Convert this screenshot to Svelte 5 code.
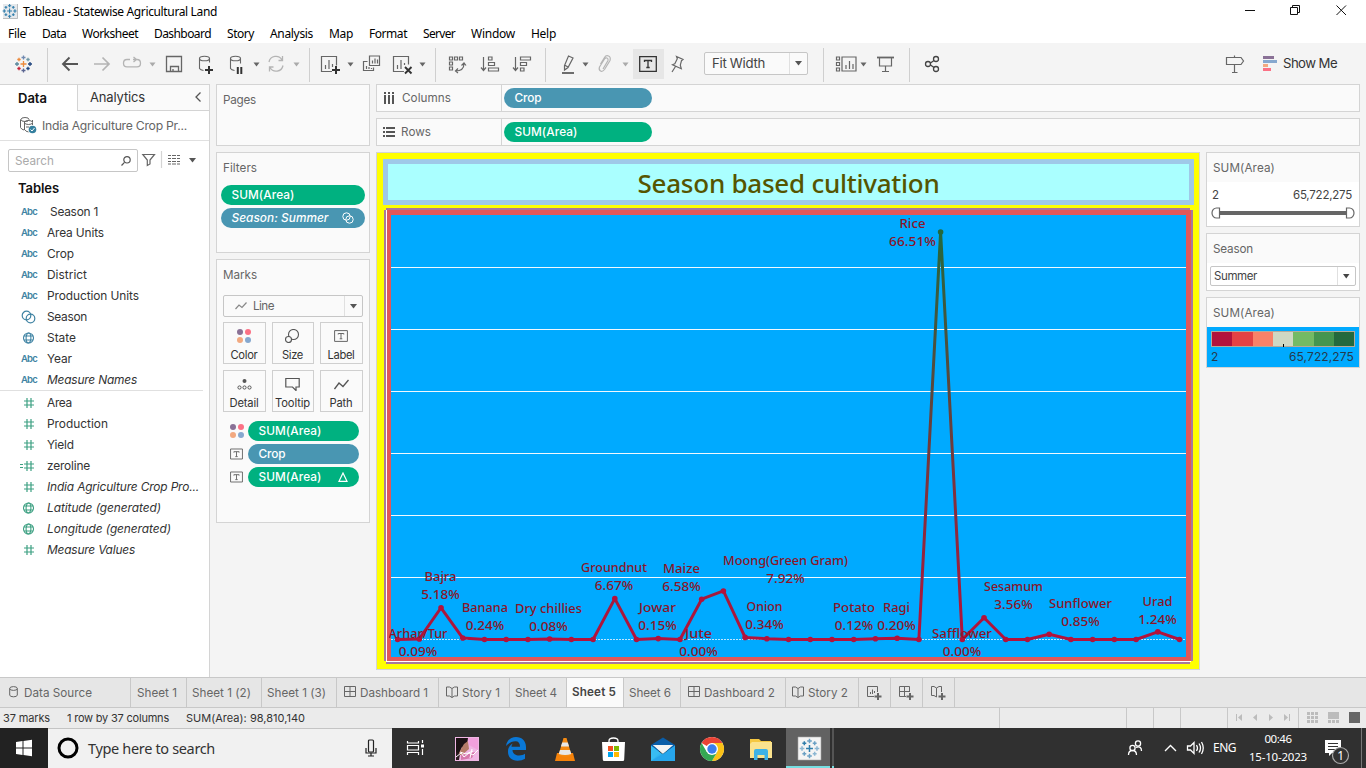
<script>
  // Tracks a label so that it takes exactly the given width.
  function fit(node, w) {
    const natural = node.getBoundingClientRect().width;
    const n = node.textContent.length;
    node.style.letterSpacing = ((w - natural) / n).toFixed(3) + 'px';
  }

  const menus = [['File', 18], ['Data', 24], ['Worksheet', 56], ['Dashboard', 57], ['Story', 27], ['Analysis', 43], ['Map', 24], ['Format', 38], ['Server', 32], ['Window', 44], ['Help', 25]];

  const dimensions = [
    ['abc', 'Season 1', 48, 'shift'], ['abc', 'Area Units', 57, ''], ['abc', 'Crop', 27, ''], ['abc', 'District', 40, ''],
    ['abc', 'Production Units', 92, ''], ['set', 'Season', 40, ''], ['globe', 'State', 29, ''], ['abc', 'Year', 25, ''],
    ['abc', 'Measure Names', 90, 'it']
  ];
  const measures = [
    ['hash', 'Area', 25, ''], ['hash', 'Production', 61, ''], ['hash', 'Yield', 27, ''], ['eqhash', 'zeroline', 43, ''],
    ['hash', 'India Agriculture Crop Pro...', 152, 'it'], ['globe', 'Latitude (generated)', 114, 'it'],
    ['globe', 'Longitude (generated)', 124, 'it'], ['hash', 'Measure Values', 88, 'it']
  ];

  const values = [0, 0.09, 5.18, 0.24, 0, 0, 0, 0.08, 0, 0, 6.67, 0, 0.15, 0, 6.58, 7.92, 0.34, 0.12, 0, 0, 0, 0, 0.12, 0.2, 0, 66.51, 0, 3.56, 0, 0, 0.85, 0, 0, 0, 0, 1.24, 0];
  const points = values.map((v, i) => [397.6 + i * 21.72, 639.5 - v * 6.127]);
  const line = points.map((p) => p[0].toFixed(2) + ',' + p[1].toFixed(2)).join(' ');
  const labels = [
    ['Arhar/Tur', 418, 638, 59, '0.09%', 418], ['Bajra', 440.5, 581, 32, '5.18%', 440.5], ['Banana', 485, 612, 46, '0.24%', 485],
    ['Dry chillies', 548.5, 613, 67, '0.08%', 548.5], ['Groundnut', 614, 572, 66, '6.67%', 614], ['Jowar', 657.5, 612, 37, '0.15%', 657.5],
    ['Maize', 681.5, 573, 37, '6.58%', 681.5], ['Jute', 698.5, 638, 27, '0.00%', 698.5], ['Moong(Green Gram)', 785.5, 565, 125, '7.92%', 785.5],
    ['Onion', 764.5, 611, 36, '0.34%', 764.5], ['Potato', 854, 612, 42, '0.12%', 854], ['Ragi', 896.5, 612, 27, '0.20%', 896.5],
    ['Rice', 912.5, 228, 26, '66.51%', 912.5], ['Safflower', 962, 638, 60, '0.00%', 962], ['Sesamum', 1013.5, 591, 59, '3.56%', 1013.5],
    ['Sunflower', 1080.5, 608, 63, '0.85%', 1080.5], ['Urad', 1157.5, 606, 30, '1.24%', 1157.5]
  ];
  const grid = [267.5, 329.5, 391.5, 453.5, 515.5, 577.5];
  const ramp = ['#b3123c', '#e44244', '#f98268', '#cfd8c3', '#74ba65', '#45954f', '#24693d'];
  const sparks = [[0, 0, 3], [0, -6.5, 2], [0, 6.5, 2], [-6.5, 0, 2], [6.5, 0, 2], [-4.5, -4.5, 1.7], [4.5, -4.5, 1.7], [-4.5, 4.5, 1.7], [4.5, 4.5, 1.7]];
</script>

{#snippet t(text, w, cls)}
  <span class="t {cls}" use:fit={w}>{text}</span>
{/snippet}

{#snippet logo(cx, cy, s, colors)}
  <g transform="translate({cx} {cy}) scale({s})" stroke-width="1.3" fill="none">
    {#each sparks as [x, y, r], i}
      <path d="M{x - r} {y}h{r * 2}M{x} {y - r}v{r * 2}" stroke={colors[i % colors.length]} />
    {/each}
  </g>
{/snippet}

{#snippet caret(x, y, c)}
  <path d="M{x} {y}h6l-3 4z" fill={c} stroke="none" />
{/snippet}

{#snippet dots()}
  <svg class="dots" width="14" height="14" viewBox="0 0 14 14"><circle cx="3" cy="3" r="3" fill="#8a7196" /><circle cx="11" cy="3" r="3" fill="#fb7185" /><circle cx="3" cy="11" r="3" fill="#f2a980" /><circle cx="11" cy="11" r="3" fill="#86a8cf" /></svg>
{/snippet}

{#snippet tbox(w, h)}
  <svg width={w} height={h} viewBox="0 0 14 12" fill="none" stroke="#666"><path d="M.6.6h12.8v10.8H.6z" /><path d="M4.2 4.5V3.5h5.6v1M7 3.5v5.2M5.7 8.8h2.6" /></svg>
{/snippet}

{#snippet fieldIcon(kind)}
  {#if kind === 'abc'}
    {@render t('Abc', 16, 'abc')}
  {:else}
    <svg width="24" height="16" viewBox="0 0 24 16" fill="none">
      {#if kind === 'set'}
        <g stroke="#3f83a3" stroke-width="1.2"><circle cx="10.5" cy="6.5" r="4.3" /><circle cx="14.5" cy="9.5" r="4.3" /></g>
      {:else if kind === 'globe'}
        <g class="globe" stroke-width="1.1"><circle cx="12.5" cy="8" r="5" /><ellipse cx="12.5" cy="8" rx="2.4" ry="5" /><path d="M8 6h9M8 10h9" /></g>
      {:else}
        <path d="M11 3v10M15 3v10M8 6h10M8 10h10" stroke="#3da082" stroke-width="1.2" />
        {#if kind === 'eqhash'}<path d="M4 6.5h3M4 9.5h3" stroke="#3da082" />{/if}
      {/if}
    </svg>
  {/if}
{/snippet}

{#snippet gridIcon()}
  <svg class="tabicon" width="12" height="12" viewBox="0 0 12 12" fill="none" stroke="#666"><path d="M.5.5h11v10H.5zM6 .5v10M.5 5.5h11" /></svg>
{/snippet}
{#snippet bookIcon()}
  <svg class="tabicon" width="12" height="12" viewBox="0 0 12 12" fill="none" stroke="#666"><path d="M6 2.500L3.500 1H.5v9h3L6 11.500 8.500 10h3V1h-3L6 2.500v9" /></svg>
{/snippet}

<div class="app">
  <header class="titlebar">
    <svg width="18" height="19" viewBox="0 0 18 19"><path d="M3 4h15v15H3z" fill="#e6e9ec" /><path d="M17.500 4v14.500H3" stroke="#b9bdc0" fill="none" />{@render logo(9.600, 11, 0.820, ['#2f7dab'])}</svg>
    {@render t('Tableau - Statewise Agricultural Land', 194, 'wintitle')}
    <svg class="winctl" width="120" height="22" viewBox="1240 0 120 22" fill="none" stroke="#111"><path d="M1245 10.500h10M1290.500 7.500h7v7h-7zM1292.500 7V5.500h7v7h-2M1336.500 5.500l9.500 9.500M1346 5.500l-9.500 9.500" /></svg>
  </header>
  <nav class="menu">{#each menus as [m, w]}{@render t(m, w, 'mi')}{/each}</nav>

  <div class="toolbar">
    <svg width="47" height="41" viewBox="0 43 47 41">{@render logo(23.500, 64, 1, ['#eb8a3c', '#7089b0', '#5a6591', '#59879b', '#1f447e', '#eb8a3c', '#7099a6', '#c72035', '#1f447e'])}</svg>
    <i></i>
    <svg width="261" height="41" viewBox="48 43 261 41" fill="none" stroke="#666" stroke-width="1.100">
      <path d="M78 64H63M69.500 57.500L63 64l6.500 6.500" stroke="#555" stroke-width="1.900" />
      <path d="M94 64h15M102.500 57.500L109 64l-6.500 6.500" stroke="#b4b4b4" stroke-width="1.700" />
      <path d="M130 59.500h-3q-3.500 0-3.500 3.700t3.500 3.700h10q3.500 0 3.500-3.700 0-3.700-3.500-3.700h-4M133.500 57l3 2.500-3 2.500" stroke="#b4b4b4" stroke-width="1.300" />
      {@render caret(149.500, 62.500, '#aaa')}
      <path d="M166.500 56.500h15v15h-15zM170.500 71.500v-5h8v5M173 69v2.500" stroke-width="1.300" />
      <ellipse cx="204.500" cy="58.500" rx="5" ry="2.300" /><path d="M199.500 58.500v10q1 1.500 4 2M209.500 58.500v4" />
      <path d="M209 66v8M205 70h8" stroke="#333" stroke-width="2" />
      <ellipse cx="235.500" cy="58.500" rx="5" ry="2.300" /><path d="M230.500 58.500v10q1 1.500 4 2M240.500 58.500v5" />
      <path d="M237.800 67v7M241.300 67v7" stroke="#333" stroke-width="2" />
      {@render caret(253.500, 62.500, '#666')}
      <path d="M269 62a7 7 0 0 1 13-2M282.500 56v4.500h-4M283 65.500a7 7 0 0 1-13 2M269.500 71.500V67h4" stroke="#b4b4b4" stroke-width="1.300" />
      {@render caret(293.500, 62.500, '#aaa')}
    </svg>
    <i></i>
    <svg width="125" height="41" viewBox="310 43 125 41" fill="none" stroke="#666" stroke-width="1.200">
      <path d="M332 71.500h-10.500v-15h15v9M325.500 69v-4M329 69v-9M332.500 67v-3" /><path d="M336 66v8M332 70h8" stroke="#333" stroke-width="2" />
      {@render caret(347.500, 62.500, '#666')}
      <path d="M369.500 56h10v9.500h-10zM372.500 63.500v-3M375 63.500v-5M377.500 63.500v-4M367.500 61.500h-4v9h10v-3M366.500 69v-3M369 69v-2M371.500 69v-1" />
      <path d="M404 71.500h-10.500v-15h15v8M397.500 69v-4M401 69v-9M404.500 65v-2" /><path d="M405 67l6.500 6.500M411.500 67l-6.500 6.500" stroke="#333" stroke-width="1.900" />
      {@render caret(419.500, 62.500, '#666')}
    </svg>
    <i></i>
    <svg width="109" height="41" viewBox="436 43 109 41" fill="none" stroke="#666" stroke-width="1.200">
      <path d="M449.500 57h3v3h-3zM454.500 57h3v3h-3zM459.500 57h3v3h-3zM449.500 62h3v3h-3zM449.500 67h3v3h-3zM464 63.500c0 5-3 7.500-8.500 7.500M461.500 65.500l2.500-2.500 2 2.500M458 68.500l-2.500 2.500 2.500 2" />
      <path d="M483.500 57v13M481 67.500l2.500 3 2.500-3M488.500 57h3.500v3h-3.500zM488.500 62.500h6v3h-6zM488.500 68h10v3h-10z" />
      <path d="M515.500 57v13M513 67.500l2.500 3 2.500-3M520.500 57h10v3h-10zM520.500 62.500h6v3h-6zM520.500 68h3.500v3h-3.500z" />
    </svg>
    <i></i>
    <svg width="86" height="41" viewBox="546 43 86 41" fill="none" stroke="#666" stroke-width="1.200">
      <path d="M568.500 56l4.500 2-5 9.500-3.500 2.500v-4.500zM564.500 65l3.500 2" /><path d="M562 73h12" stroke-width="1.900" />
      {@render caret(582.500, 62.500, '#666')}
      <path d="M603 69l5-8.500q.5-2-1-2.500t-2.500 1l-5 8q-1 3 1 4t4-1.500l5.500-9q1-3.500-1.500-4.500t-4 1.500l-4 6.500" stroke="#b4b4b4" />
      {@render caret(622.500, 62.500, '#aaa')}
    </svg>
    <div class="on"><svg width="18" height="16" viewBox="0 0 18 16" fill="none" stroke="#333" stroke-width="1.300"><path d="M.7.7h16.600v14.600H.7zM5.500 6V4.500h7V6M9 4.500v7M7.300 11.500h3.400" /></svg></div>
    <svg width="41" height="41" viewBox="663 43 41 41" fill="none" stroke="#666" stroke-width="1.200"><path d="M676.500 56.500l6.500 3-1.500 1.200-1.200 4.500 1 3.500-8.800-4 2.300-1 2.500-5zM675.500 66.500l-3.500 5.500" /></svg>
    <div class="select fitsel">{@render t('Fit Width', 53, 'fw')}<b><svg width="8" height="5" viewBox="0 0 8 5"><path d="M0 0h7l-3.500 4.500z" fill="#555" /></svg></b></div>
    <i class="gap"></i>
    <svg width="85" height="41" viewBox="824 43 85 41" fill="none" stroke="#666" stroke-width="1.200">
      <path d="M836.500 57h3v3h-3zM836.500 62.500h3v3h-3zM836.500 68h3v3h-3zM842 57h14v14h-14zM846 69v-4M849.500 69v-8M853 69v-5" />
      {@render caret(860.500, 62.500, '#666')}
      <path d="M879.500 57.500h12v8.500h-12zM885.500 66v5.500M882 71.500h7" /><path d="M877 57.500h17" stroke-width="1.800" />
    </svg>
    <i></i>
    <svg width="40" height="41" viewBox="910 43 40 41" fill="none" stroke="#444" stroke-width="1.300"><circle cx="928" cy="64" r="2.500" /><circle cx="936" cy="59" r="2.500" /><circle cx="936" cy="69" r="2.500" /><path d="M930.500 63l3.500-2.500M930.500 65l3.500 2.500" /></svg>
    <svg class="right" width="60" height="41" viewBox="1222 43 60 41"><path d="M1234.500 55.500v2M1234.500 64.500v8M1232 72.500h5.500M1226.500 57.500h14.500l2.500 3.500-2.500 3.500h-14.500z" fill="#f4f4f4" stroke="#666" stroke-width="1.200" /><path d="M1263 56h11v3h-11z" fill="#8a7196" /><path d="M1263 60h14v3h-14z" fill="#86a8cf" /><path d="M1263 64h5v3h-5z" fill="#f2a980" /><path d="M1263 68h8v3h-8z" fill="#fb7185" /></svg>
    {@render t('Show Me', 54, 'showme')}
  </div>

  <main>
    <aside class="data">
      <div class="dtabs"><div class="dt act">{@render t('Data', 29, 'datab')}</div><div class="dt an">{@render t('Analytics', 55, 'anl')}<svg width="7" height="10" viewBox="0 0 7 10" fill="none" stroke="#555" stroke-width="1.300"><path d="M5.500.500L1 5l4.500 4.500" /></svg></div></div>
      <div class="source">
        <svg width="17" height="17" viewBox="0 0 17 17" fill="none" stroke="#666"><path d="M.5 2.500v8q1 2 3.500 2.500M4.500 13V5M12.500 5V3" /><ellipse cx="5" cy="2.500" rx="4" ry="2" /><ellipse cx="8.500" cy="5.500" rx="4" ry="2" /><path d="M4.500 5.500v7q1 2 4 2.500M12.500 6v2M6 10h3" /><circle cx="12.500" cy="12.500" r="3.800" fill="#35809f" stroke="none" /><path d="M10.500 12.500l1.500 1.500 2.500-3" stroke="#fff" /></svg>
        {@render t('India Agriculture Crop Pr...', 145, 'src')}
      </div>
      <div class="searchrow">
        <div class="search">{@render t('Search', 39, 'ph')}<svg width="10" height="10" viewBox="0 0 10 10" fill="none" stroke="#555" stroke-width="1.200"><circle cx="6" cy="3.800" r="3.200" /><path d="M3.500 6.300L.5 9.500" /></svg></div>
        <svg width="62" height="22" viewBox="138 149 62 22" fill="none" stroke="#666" stroke-width="1.200"><path d="M142.800 154.500h11.700l-4.500 5.500v4l-2.700 1.500V160z" /><path d="M161.500 151v17" stroke="#d4d4d4" /><path d="M168 155.500h3m1 0h4m1 0h3M168 158.500h3m1 0h4m1 0h3M168 161.500h3m1 0h4m1 0h3M168 164h3m1 0h4m1 0h3" /><path d="M189 158h7l-3.500 4.500z" fill="#555" stroke="none" /></svg>
      </div>
      <div class="tables">{@render t('Tables', 41, 'tb')}</div>
      <ul class="dims">{#each dimensions as [k, n, w, c]}<li><span class="ic">{@render fieldIcon(k)}</span>{@render t(n, w, 'fn ' + c)}</li>{/each}</ul>
      <ul class="meas">{#each measures as [k, n, w, c]}<li><span class="ic">{@render fieldIcon(k)}</span>{@render t(n, w, 'fn ' + c)}</li>{/each}</ul>
    </aside>

    <section class="cards">
      <div class="card pages">{@render t('Pages', 33, 'ct')}</div>
      <div class="card filters">{@render t('Filters', 34, 'ct')}
        <div class="pill g">{@render t('SUM(Area)', 63, 'pt')}</div>
        <div class="pill b">{@render t('Season: Summer', 97, 'pt it')}<svg width="12" height="12" viewBox="0 0 12 12" fill="none" stroke="#fff"><circle cx="4.500" cy="4.500" r="3.700" /><circle cx="7.500" cy="7.500" r="3.700" /></svg></div>
      </div>
      <div class="card marks">{@render t('Marks', 34, 'ct')}
        <div class="select linesel"><svg width="12" height="8" viewBox="0 0 12 8" fill="none" stroke="#888" stroke-width="1.200"><path d="M.5 7L4 3l3 2.500L11.500.500" /></svg>{@render t('Line', 21, 'ln')}<b><svg width="8" height="5" viewBox="0 0 8 5"><path d="M0 0h7l-3.500 4.500z" fill="#555" /></svg></b></div>
        <div class="btns">
          <div class="btn">{@render dots()}{@render t('Color', 27, 'bt')}</div>
          <div class="btn"><svg width="15" height="14" viewBox="0 0 15 14" fill="none" stroke="#555" stroke-width="1.100"><circle cx="8.500" cy="5.500" r="5" /><circle cx="3.500" cy="10.500" r="3" fill="#fafafa" /></svg>{@render t('Size', 21, 'bt')}</div>
          <div class="btn">{@render tbox(14, 14)}{@render t('Label', 27, 'bt')}</div>
          <div class="btn"><svg width="15" height="14" viewBox="0 0 15 14" fill="none" stroke="#555"><circle cx="7.500" cy="4" r="2" fill="#555" stroke="none" /><circle cx="2.500" cy="10.500" r="1.600" /><circle cx="7.500" cy="10.500" r="1.600" /><circle cx="12.500" cy="10.500" r="1.600" /></svg>{@render t('Detail', 29, 'bt')}</div>
          <div class="btn"><svg width="15" height="14" viewBox="0 0 15 14" fill="none" stroke="#555" stroke-width="1.200"><path d="M.8 1.500h13.400V10H11v3.500L7.500 10H.8z" /></svg>{@render t('Tooltip', 35, 'bt')}</div>
          <div class="btn"><svg width="15" height="14" viewBox="0 0 15 14" fill="none" stroke="#555" stroke-width="1.300"><path d="M.5 12L5 6l4 3.500L14.500 3" /></svg>{@render t('Path', 23, 'bt')}</div>
        </div>
        <div class="mrow"><span class="mi2">{@render dots()}</span><div class="pill g">{@render t('SUM(Area)', 63, 'pt')}</div></div>
        <div class="mrow"><span class="mi2">{@render tbox(13, 12)}</span><div class="pill b">{@render t('Crop', 27, 'pt')}</div></div>
        <div class="mrow"><span class="mi2">{@render tbox(13, 12)}</span><div class="pill g">{@render t('SUM(Area)', 63, 'pt')}<svg width="10" height="10" viewBox="0 0 10 10" fill="none" stroke="#fff" stroke-width="1.200"><path d="M5 1l4 8.300H1z" /></svg></div></div>
      </div>
    </section>

    <section class="work">
      <div class="shelf"><div class="sl"><svg width="11" height="12" viewBox="0 0 11 12" fill="#555"><path d="M0 0h2v2H0zM4 0h2v2H4zM8 0h2v2H8zM0 3h2v9H0zM4 3h2v9H4zM8 3h2v9H8z" /></svg>{@render t('Columns', 49, 'st')}</div><div class="pill b">{@render t('Crop', 27, 'pt')}</div></div>
      <div class="shelf"><div class="sl rows"><svg width="12" height="11" viewBox="0 0 12 11" fill="#555"><path d="M0 0h2v2H0zM0 4h2v2H0zM0 8h2v2H0zM3 0h9v2H3zM3 4h9v2H3zM3 8h9v2H3z" /></svg>{@render t('Rows', 30, 'st')}</div><div class="pill g">{@render t('SUM(Area)', 63, 'pt')}</div></div>
      <div class="lower">
        <div class="view">
          <div class="vtitle">{@render t('Season based cultivation', 302, 'vt')}</div>
          <svg class="chart" width="821" height="463" viewBox="377 206 821 463">
            <defs>
              <linearGradient id="ramp" gradientUnits="userSpaceOnUse" x1="0" y1="640" x2="0" y2="232"><stop offset="0" stop-color="#b3123c" /><stop offset="1" stop-color="#24693d" /></linearGradient>
              <clipPath id="pane"><rect x="389" y="215" width="797" height="442" /></clipPath>
            </defs>
            <path d="M384 210h2v451h-2zM386 208h804v2h-804zM1191 210h2v451h-2zM386 662h804v2h-804z" fill="#a8789c" />
            <path d="M386 210h805v452H386z" fill="#fff" />
            <path d="M387 210h804v451H387z" fill="#e15759" />
            <path d="M391 215h795v442H391z" fill="#00aaff" />
            {#each grid as y}<path d="M391 {y}h795" stroke="#f0f8ff" />{/each}
            <path d="M391 639.500h795" stroke="#bfe6ff" stroke-dasharray="2 1" />
            <polyline points={line} fill="none" stroke="url(#ramp)" stroke-width="3" stroke-linejoin="round" />
            {#each points as [x, y], i}<circle cx={x} cy={y} r="2.800" fill={i === 25 ? '#24693d' : '#b3123c'} />{/each}
            <g clip-path="url(#pane)" class="lab">
              {#each labels as [n, x, y, w, p, px]}
                <text x={x - w / 2} {y} textLength={w} lengthAdjust="spacingAndGlyphs">{n}</text>
                <text x={px - (p.length > 5 ? 23.500 : 19.200)} y={y + 18} textLength={p.length > 5 ? 47 : 38.500} lengthAdjust="spacingAndGlyphs">{p}</text>
              {/each}
            </g>
          </svg>
        </div>
        <aside class="legends">
          <div class="lcard c1"><div class="lh">{@render t('SUM(Area)', 62, 'ct2')}</div>
            <div class="nums">{@render t('2', 7, 'nm')}{@render t('65,722,275', 59, 'nm')}</div>
            <svg class="slider" width="146" height="12" viewBox="1210 207 146 12"><path d="M1219 211h128v4h-128z" fill="#666" /><path d="M1219.500 208v10h-3a4.500 5 0 0 1 0-10zM1346.500 208v10h3a4.500 5 0 0 0 0-10z" fill="#fff" stroke="#666" stroke-width="1.200" /></svg>
          </div>
          <div class="lcard c2"><div class="lh">{@render t('Season', 40, 'ct2')}</div>
            <div class="select sumsel">{@render t('Summer', 43, 'nm')}<b><svg width="7" height="5" viewBox="0 0 7 5"><path d="M0 0h6.500L3.250 4.500z" fill="#444" /></svg></b></div>
          </div>
          <div class="lcard c3"><div class="lh">{@render t('SUM(Area)', 62, 'ct2')}</div>
            <div class="blue">
              <svg width="144" height="16" viewBox="0 0 144 16"><path d="M0 0h144v16H0z" fill="#b5ab9a" />{#each ramp as c, i}<rect x={1 + Math.round(i * 20.300)} y="1" width={i === 6 ? 20 : 21} height="14" fill={c} />{/each}<path d="M72.500 13v3" stroke="#000" /></svg>
              <div class="nums">{@render t('2', 7, 'lg')}{@render t('65,722,275', 65, 'lg')}</div>
            </div>
          </div>
        </aside>
      </div>
    </section>
  </main>

  <div class="tabs">
    <div class="tab ds"><svg class="tabicon" width="10" height="12" viewBox="0 0 10 12" fill="none" stroke="#666"><ellipse cx="4.500" cy="2.500" rx="3.800" ry="1.900" /><path d="M.7 2.500v6.500q0 1.800 3.800 1.800T8.300 9V2.500" /></svg>{@render t('Data Source', 68, 'tt')}</div>
    <div class="tab s1">{@render t('Sheet 1', 40, 'tt')}</div>
    <div class="tab s2">{@render t('Sheet 1 (2)', 59, 'tt')}</div>
    <div class="tab s2">{@render t('Sheet 1 (3)', 59, 'tt')}</div>
    <div class="tab d1">{@render gridIcon()}{@render t('Dashboard 1', 68, 'tt')}</div>
    <div class="tab y1">{@render bookIcon()}{@render t('Story 1', 38, 'tt')}</div>
    <div class="tab s4">{@render t('Sheet 4', 42, 'tt')}</div>
    <div class="tab s4 cur">{@render t('Sheet 5', 44, 'tt')}</div>
    <div class="tab s4">{@render t('Sheet 6', 42, 'tt')}</div>
    <div class="tab d2">{@render gridIcon()}{@render t('Dashboard 2', 71, 'tt')}</div>
    <div class="tab y2">{@render bookIcon()}{@render t('Story 2', 40, 'tt')}</div>
    <div class="tab add"><svg width="17" height="16" viewBox="0 0 17 16" fill="none" stroke="#666"><path d="M8 11.500H1.500v-10h10V7M4.500 9V7M6.500 9V4.500M8.500 8V6" /><path d="M12 8v7M8.500 11.500h7" stroke-width="2" /></svg></div>
    <div class="tab add"><svg width="17" height="16" viewBox="0 0 17 16" fill="none" stroke="#666"><path d="M8 11.500H1.500v-10h10V7M6.500 1.500v10M1.500 6.500h10" /><path d="M12 8v7M8.500 11.500h7" stroke-width="2" /></svg></div>
    <div class="tab add"><svg width="17" height="16" viewBox="0 0 17 16" fill="none" stroke="#666"><path d="M6.500 3L4 1.500H1.500v9H4l2.500 1.500V3L9 1.500h2.500V7" /><path d="M12 8v7M8.500 11.500h7" stroke-width="2" /></svg></div>
  </div>

  <div class="status">
    {@render t('37 marks', 47, 'sx')}{@render t('1 row by 37 columns', 102, 'sx')}{@render t('SUM(Area): 98,810,140', 119, 'sx')}
    <svg width="376" height="20" viewBox="990 708 376 20"><path d="M999.500 708v20M1126.500 708v20M1153.500 708v20M1180.500 708v20M1227.500 708v20M1298.500 708v20" stroke="#c8c8c8" /><path d="M1236 714h1v7h-1zM1242 714v7l-4-3.500zM1257 714v7l-4-3.500zM1269 714v7l4-3.500zM1284 714v7l4-3.500zM1289 714h1v7h-1z" fill="#bcbcbc" /><path d="M1307 712h3v3h-3zM1311 712h3v3h-3zM1315 712h3v3h-3zM1307 716h3v3h-3zM1311 716h3v3h-3zM1315 716h3v3h-3zM1307 720h3v3h-3zM1311 720h3v3h-3zM1315 720h3v3h-3zM1328 712h11v7h-11zM1328 720h3v3h-3zM1332 720h3v3h-3zM1336 720h3v3h-3z" fill="#bcbcbc" /><path d="M1349 712h11v11h-11z" fill="#666" /></svg>
  </div>

  <footer>
    <svg width="48" height="40" viewBox="0 728 48 40" fill="#fff"><path d="M16 742l6.500-1v6.500H16zM23.500 741l8.500-1.200v7.700h-8.500zM16 748.500h6.500v6.500l-6.500-1zM23.500 748.500H32v7.700l-8.500-1.200z" /></svg>
    <div class="tsearch"><svg width="22" height="22" viewBox="0 0 22 22"><circle cx="11" cy="11" r="9" fill="none" stroke="#000" stroke-width="3" /></svg>{@render t('Type here to search', 127, 'ts')}<svg class="mic" width="12" height="18" viewBox="0 0 12 18" fill="none" stroke="#222" stroke-width="1.200"><rect x="3.500" y="1" width="5" height="12" rx="1" /><path d="M1 9v5h10V9M6 14v3M3 17h6" /></svg></div>
    <svg width="394" height="40" viewBox="392 728 394 40">
      <path d="M407.500 741v2h11v-2M407.500 755v-2.500h11v2.500M407.500 745.500h11v4.500h-11zM422.500 740v3M422.500 749v6" fill="none" stroke="#fff" stroke-width="1.200" /><path d="M421 744.500h3v3h-3z" fill="#fff" />
      <path d="M455 737h24v24h-24z" fill="#f0b6e4" /><path d="M456 738h12l-1 7-3 4-2-2-3 7-3 2z" fill="#1c1215" /><path d="M464 744l4-3 1 8-7 6h-4l3-6z" fill="#b57b68" /><path d="M468 738h10v12l-9-5z" fill="#f2a0dd" /><path d="M456 752l4 2-1 6h-3z" fill="#2c1a20" /><path d="M461 755l14-3-3 6-11 2z" fill="#c44c86" opacity=".6" /><path d="M456 757l5-4 3 4 5-4 4 2 5-5M460 752l6 2 7-3M472 749l-2 9" stroke="#fff" fill="none" />
      <path d="M506 746c1-6 5-9 10-9 6 0 10 4 10 10v3h-13.500c.2 4 3.500 5.500 6.500 5.500 2.500 0 4.500-.7 6-1.700v5c-2 1.300-4.500 1.900-7.500 1.900-6 0-9.500-3.700-9.500-9 0-4 2-7 5-8.500-1 1-1.400 2.300-1.500 3.500h8.500c0-3.500-1.500-5.500-4.500-5.500-4 0-7 2-9.500 4.800z" fill="#0a78d7" />
      <path d="M557 753h16l2 8h-20z" fill="#f5820a" /><path d="M563.500 738h3l5 17q-6 3.500-13 0z" fill="#f58a12" /><path d="M562.200 742.500h5.600l1.300 4h-8.200zM560 750h10l1.300 4q-6 2-12.600 0z" fill="#e8e8e8" />
      <path d="M602 742h23l-.8 17.500q0 1.500-1.500 1.500h-18.400q-1.500 0-1.500-1.500z" fill="#fff" /><path d="M609 742v-1q0-3 4.500-3t4.500 3v1" fill="none" stroke="#fff" stroke-width="1.300" /><path d="M608 746h5v5h-5z" fill="#f25022" /><path d="M614 746h5v5h-5z" fill="#7fba00" /><path d="M608 752h5v5h-5z" fill="#00a4ef" /><path d="M614 752h5v5h-5z" fill="#ffb900" />
      <path d="M651 745l12-7.500 12 7.500v6h-24z" fill="#0a5da8" /><path d="M653 745h20l-10 9z" fill="#f3f3f3" /><path d="M651 745.500l12 9 12-9V761h-24z" fill="#31b6f0" /><path d="M653 745h20l-10 8z" fill="#f3f3f3" /><path d="M651 761v-15l9 7z" fill="#38bdf2" /><path d="M675 746v15h-24z" fill="#24a0ea" opacity=".7" />
      <circle cx="712" cy="749" r="12" fill="#fff" /><path d="M712 749L701.600 743a12 12 0 0 1 20.800 0z" fill="#ea4335" /><path d="M712 743h10.400A12 12 0 0 1 712 761l5.200-9z" fill="#fbc116" /><path d="M701.600 743A12 12 0 0 0 712 761l5.200-9h-10.400z" fill="#34a853" /><circle cx="712" cy="749" r="6" fill="#fff" /><circle cx="712" cy="749" r="4.700" fill="#3b7ded" />
      <path d="M750 739h9l2 2h10v17h-21z" fill="#f5c842" /><path d="M752 742h20v16h-22v-14z" fill="#fbe38e" /><path d="M754 751q0-2 2-2h10q2 0 2 2v9h-3.500v-5h-7v5H754z" fill="#3eb2e6" />
    </svg>
    <svg width="49" height="40" viewBox="786 728 49 40"><path d="M786 728h44v40h-44z" fill="#626262" /><path d="M832 728h2v40h-2z" fill="#555" /><path d="M786 766h44v2h-44zM832 766h2v2h-2z" fill="#76dfe2" /><path d="M798 737h23v23h-23z" fill="#f4f4f4" stroke="#aaa" stroke-width=".6" />{@render logo(809.500, 748.500, 1.150, ['#2f7dab', '#6aa0c4', '#6aa0c4', '#8bb6d2', '#8bb6d2'])}</svg>
    <svg class="right" width="84" height="40" viewBox="1123 728 84 40" fill="none" stroke="#fff" stroke-width="1.300"><circle cx="1138" cy="743.500" r="2.600" /><circle cx="1132.500" cy="748" r="2.600" /><path d="M1128.500 755q0-4.500 4-4.500t4 4.500M1136 747.500q5.500-2 5.500 3.500M1165 751l5.500-5.500 5.500 5.500M1187.500 746v4h3l3.500 3.500v-11l-3.500 3.500zM1196.500 745q2 3 0 6M1199 743.500q3 4.500 0 9M1201.500 742q3.500 6 0 12" /></svg>
    {@render t('ENG', 23, 'eng')}
    <div class="clock">{@render t('00:46', 27, 'cl')}{@render t('15-10-2023', 58, 'cl')}</div>
    <svg width="44" height="40" viewBox="1322 728 44 40"><path d="M1325 740h16v13h-9l-3 3v-3h-4z" fill="#fff" /><path d="M1328 743.500h10M1328 746.500h10M1328 749.500h7" stroke="#333" /><circle cx="1340.500" cy="755.500" r="8" fill="#333" stroke="#aaa" stroke-width="1.200" /><text x="1337.300" y="759.500" class="badge">1</text><path d="M1361.500 728v40" stroke="#777" /></svg>
  </footer>
</div>

<style>
  :global(body) { margin: 0; overflow: hidden; }
  * { box-sizing: border-box; }
  .app { width: 1366px; height: 768px; background: #f4f4f4; font-family: Inter, "Liberation Sans", sans-serif; font-size: 11.700px; color: #333; display: flex; flex-direction: column; overflow: hidden; }
  .t { display: inline-block; white-space: pre; flex: none; line-height: 16px; }
  svg { display: block; flex: none; }
  .titlebar { height: 23px; background: #fff; display: flex; align-items: flex-start; }
  .wintitle { margin: 4px 0 0 5px; font: 12px/16px "Noto Sans", sans-serif; color: #000; }
  .winctl { margin: 0 6px 0 auto; }
  .menu { height: 20px; background: #fff; display: flex; gap: 16px; padding: 3px 0 0 8px; }
  .mi { font: 12px/16px "Noto Sans", sans-serif; color: #000; }
  .toolbar { height: 41px; display: flex; align-items: center; }
  .toolbar i { width: 1px; height: 34px; background: #cfcfcf; flex: none; margin-top: 2px; }
  .toolbar i.gap { margin-left: 15px; }
  .on { width: 31px; height: 30px; margin-left: 1px; background: #e6e6e6; display: flex; align-items: center; justify-content: center; }
  .on svg { margin-right: 2px; }
  .on + svg { margin-left: -1px; }
  .select { display: flex; align-items: center; border: 1px solid #c6c6c6; border-radius: 2px; background: #fafafa; }
  .select b { display: flex; align-items: center; justify-content: center; align-self: stretch; width: 18px; margin-left: auto; border-left: 1px solid #e0e0e0; }
  .fitsel { width: 104px; height: 23px; padding-left: 7px; }
  .fw { font-size: 13.200px; margin-top: -2px; color: #444; }
  .right { margin-left: auto; }
  .showme { font-size: 13.200px; margin: -1px 29px 0 1px; color: #333; }
  main { height: 593px; display: flex; }
  .data { width: 210px; border-right: 1px solid #d4d4d4; border-top: 1px solid #d4d4d4; background: #fff; }
  .dtabs { display: flex; height: 26px; }
  .dt { display: flex; align-items: center; }
  .act { width: 77px; padding-left: 18px; }
  .an { flex: 1; background: #fafafa; border-left: 1px solid #d4d4d4; border-bottom: 1px solid #d4d4d4; padding: 0 7px 2px 12px; justify-content: space-between; }
  .datab { font-weight: 600; font-size: 13px; color: #111; margin-top: -1px; }
  .anl { font-size: 13px; }
  .source { height: 30px; border-bottom: 1px solid #e0e0e0; display: flex; align-items: center; padding-left: 20px; gap: 5px; color: #666; }
  .src { font-size: 12.200px; }
  .searchrow { display: flex; padding: 8px 0 0 8px; }
  .search { width: 130px; height: 23px; border: 1px solid #c6c6c6; border-radius: 2px; display: flex; align-items: center; justify-content: space-between; padding: 0 6px; }
  .ph { color: #aaa; }
  .tables { padding: 8px 0 0 18px; height: 29px; }
  .tb { font-weight: 600; font-size: 13px; color: #111; }
  ul { list-style: none; margin: 0; padding: 0; }
  li { height: 21px; display: flex; align-items: center; }
  .ic { width: 31px; margin-left: 16px; display: flex; }
  .abc { font-size: 9.500px; font-weight: 600; color: #3f83a3; margin-left: 5px; line-height: 18px; }
  .fn { font-size: 11.900px; color: #333; }
  .shift { margin-left: 3px; }
  .it { font-style: italic; }
  .dims { border-bottom: 1px solid #e0e0e0; margin-right: 6px; }
  .dims .globe { stroke: #3f83a3; }
  .meas { padding-top: 1px; }
  .meas .globe { stroke: #3da082; }
  .cards { width: 154px; margin-left: 6px; display: flex; flex-direction: column; gap: 6px; }
  .card { border: 1px solid #d4d4d4; background: #fafafa; padding: 7px 4px 0; display: flex; flex-direction: column; align-items: flex-start; }
  .ct { margin-left: 2px; color: #666; }
  .pages { height: 62px; }
  .filters { height: 101px; padding-top: 7px; gap: 3px; }
  .filters .ct { margin-bottom: 6px; }
  .filters .pill { width: 144px; }
  .marks { height: 264px; }
  .pill { height: 20px; border-radius: 10px; padding: 0 11px 0 10.500px; display: flex; align-items: center; justify-content: space-between; color: #fff; width: 111px; }
  .g { background: #00b180; }
  .b { background: #4996b2; }
  .pt { font-weight: 500; font-size: 11.800px; }
  .linesel { width: 140px; height: 22px; margin: 12px 0 5px 2px; padding-left: 11px; color: #666; }
  .ln { margin-left: 6px; }
  .btns { display: grid; grid-template-columns: 43px 42px 43px; gap: 6px; margin-left: 2px; }
  .btn { height: 42px; border: 1px solid #cfcfcf; display: flex; flex-direction: column; align-items: center; padding: 6px 1px 0 0; gap: 4px; }
  .bt { font-size: 11.200px; }
  .mrow { display: flex; align-items: center; margin: 0 0 3px 9px; }
  .btns + .mrow { margin-top: 9px; }
  .mi2 { width: 18px; display: flex; }
  .work { margin-left: 6px; flex: 1; display: flex; flex-direction: column; }
  .shelf { width: 984px; height: 28px; border: 1px solid #d4d4d4; background: #fafafa; display: flex; align-items: center; margin-bottom: 6px; color: #666; }
  .sl { width: 125px; align-self: stretch; border-right: 1px solid #d4d4d4; display: flex; align-items: center; padding-left: 7px; gap: 7px; }
  .rows { gap: 6px; padding-left: 6px; }
  .sl + .pill { margin-left: 2px; }
  .shelf .pill { width: 148px; }
  .lower { display: flex; gap: 6px; }
  .view { width: 824px; height: 518px; background: #ff0; border: 1px solid #d4d4d4; }
  .vtitle { margin: 6px 5px 1px 6px; height: 46px; border: 5px solid #9fc9e8; background: #aaffff; display: flex; align-items: center; justify-content: center; }
  .vt { font: 550 26px/34px "Noto Sans", sans-serif; color: #550; margin-top: 2px; }
  .lab { font: 500 13px "Noto Sans", sans-serif; fill: #8a1528; }
  .legends { width: 154px; display: flex; flex-direction: column; gap: 6px; }
  .lcard { border: 1px solid #d4d4d4; background: #fff; }
  .c1 { height: 75px; }
  .c2 { height: 58px; }
  .c3 { height: 71px; }
  .lh { height: 29px; background: #fafafa; padding: 7px 6px 0; color: #666; }
  .nums { display: flex; justify-content: space-between; padding: 5px 7px 0 5px; }
  .nm { font-size: 11.500px; color: #444; }
  .slider { margin: 4px 0 0 3px; }
  .sumsel { width: 146px; height: 20px; margin: 3px 0 0 3px; background: #fff; padding-left: 3px; }
  .c3 .blue { height: 40px; background: #00aaff; padding: 4px 4px 0; }
  .blue .nums { padding: 2px 1px 0 0; }
  .lg { font-size: 12px; color: #263a4c; }
  .tabs { height: 31px; border-top: 1px solid #c8c8c8; border-bottom: 1px solid #c8c8c8; background: #e6e6e6; display: flex; }
  .tab { border-right: 1px solid #c8c8c8; display: flex; align-items: center; gap: 4px; padding-left: 6px; color: #666; }
  .tab .t { margin-top: 1px; }
  .tabicon { margin-top: -2px; }
  .ds { width: 131px; padding-left: 9px; gap: 5px; }
  .s1 { width: 56px; }
  .s2 { width: 75px; padding-left: 5px; }
  .d1 { width: 102px; padding-left: 7px; }
  .y1 { width: 71px; padding-left: 7px; }
  .s4 { width: 57px; padding-left: 5px; }
  .d2 { width: 105px; padding-left: 7px; }
  .y2 { width: 73px; padding-left: 6px; }
  .add { width: 32px; padding-left: 7px; }
  .cur { background: #fafafa; font-weight: 600; color: #444; }
  .tab.cur .t { margin-top: -2px; }
  .status { height: 20px; background: #ebebeb; display: flex; align-items: center; padding-left: 3px; gap: 17px; }
  .status svg { margin-left: auto; }
  .sx { font-size: 11px; color: #333; }
  footer { height: 40px; background: #303030; display: flex; align-items: center; color: #fff; font-family: "Noto Sans", sans-serif; }
  footer > svg:first-child { background: #222; }
  .tsearch { width: 344px; height: 40px; background: #f1f1f1; border-top: 1px solid #c4c4c4; display: flex; align-items: center; padding: 0 15px 1px 9px; }
  .ts { font-size: 14.500px; line-height: 20px; color: #333; margin: -1px 0 0 9px; }
  .mic { margin-left: auto; }
  .eng { margin: 0 13px 0 6px; font-size: 12px; }
  .clock { width: 58px; margin: -1px 15px 0 0; display: flex; flex-direction: column; align-items: center; gap: 2px; }
  .cl { font-size: 11.500px; }
  .badge { font: 12px "Noto Sans", sans-serif; fill: #fff; }
</style>
